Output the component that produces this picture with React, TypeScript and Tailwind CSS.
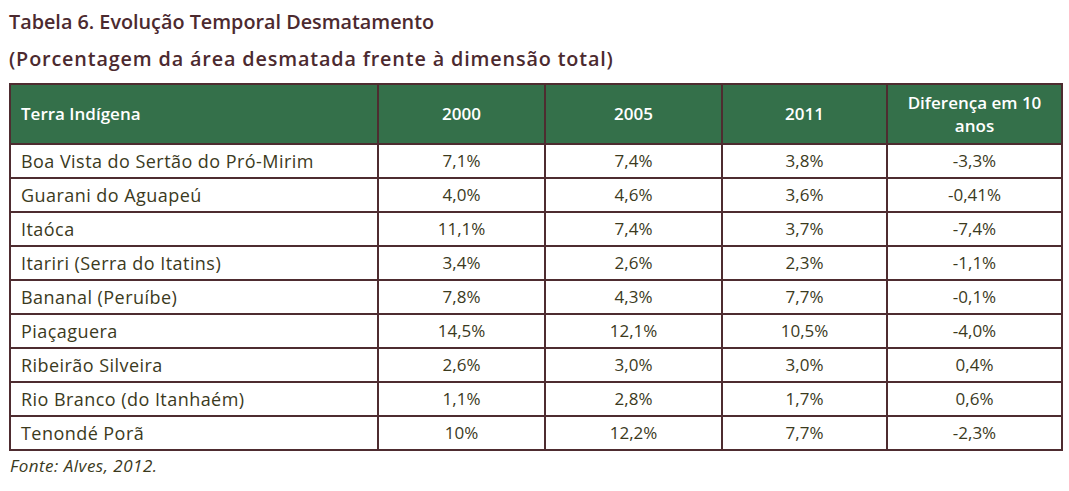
import React from 'react';

const ROWS: [string, string, string, string, string][] = [
  ['Boa Vista do Sertão do Pró-Mirim', '7,1%', '7,4%', '3,8%', '-3,3%'],
  ['Guarani do Aguapeú', '4,0%', '4,6%', '3,6%', '-0,41%'],
  ['Itaóca', '11,1%', '7,4%', '3,7%', '-7,4%'],
  ['Itariri (Serra do Itatins)', '3,4%', '2,6%', '2,3%', '-1,1%'],
  ['Bananal (Peruíbe)', '7,8%', '4,3%', '7,7%', '-0,1%'],
  ['Piaçaguera', '14,5%', '12,1%', '10,5%', '-4,0%'],
  ['Ribeirão Silveira', '2,6%', '3,0%', '3,0%', '0,4%'],
  ['Rio Branco (do Itanhaém)', '1,1%', '2,8%', '1,7%', '0,6%'],
  ['Tenondé Porã', '10%', '12,2%', '7,7%', '-2,3%'],
];

export default function App() {
  return (
    <div className="w-[1069px] h-[491px] bg-white overflow-hidden pl-[9px] pt-[3px]" style={{ fontFamily: '"Open Sans", Lato, sans-serif' }}>
      <h1 className="text-[19.8px] leading-[37px] font-semibold text-[#4c2a2f]">Tabela 6. Evolução Temporal Desmatamento</h1>
      <h2 className="text-[19.8px] leading-[37px] font-semibold text-[#4c2a2f] tracking-[0.85px]">(Porcentagem da área desmatada frente à dimensão total)</h2>
      <table className="mt-[6px] border-collapse table-fixed w-[1052px] text-[17px]">
        <colgroup>
          <col className="w-[368px]" />
          <col className="w-[167px]" />
          <col className="w-[177px]" />
          <col className="w-[165px]" />
          <col className="w-[175px]" />
        </colgroup>
        <thead>
          <tr className="h-[60px] bg-[#34704a] text-white">
            <th className="border-2 border-[#4e2c30] text-left pl-[10px] font-semibold">Terra Indígena</th>
            <th className="border-2 border-[#4e2c30] font-semibold">2000</th>
            <th className="border-2 border-[#4e2c30] font-semibold">2005</th>
            <th className="border-2 border-[#4e2c30] font-semibold">2011</th>
            <th className="border-2 border-[#4e2c30] font-semibold leading-[23px]">Diferença em 10<br />anos</th>
          </tr>
        </thead>
        <tbody className="text-[#3b3a1d]">
          {ROWS.map(r => (
            <tr key={r[0]} className="h-[34px]">
              <td className="border-2 border-[#4e2c30] pl-[10px] text-[18px] tracking-[0.45px]">{r[0]}</td>
              <td className="border-2 border-[#4e2c30] text-center">{r[1]}</td>
              <td className="border-2 border-[#4e2c30] text-center">{r[2]}</td>
              <td className="border-2 border-[#4e2c30] text-center">{r[3]}</td>
              <td className="border-2 border-[#4e2c30] text-center">{r[4]}</td>
            </tr>
          ))}
        </tbody>
      </table>
      <p className="italic text-[17px] tracking-[0.5px] text-[#3b3a1d] mt-[2px] pl-[1px]">Fonte: Alves, 2012.</p>
    </div>
  );
}
